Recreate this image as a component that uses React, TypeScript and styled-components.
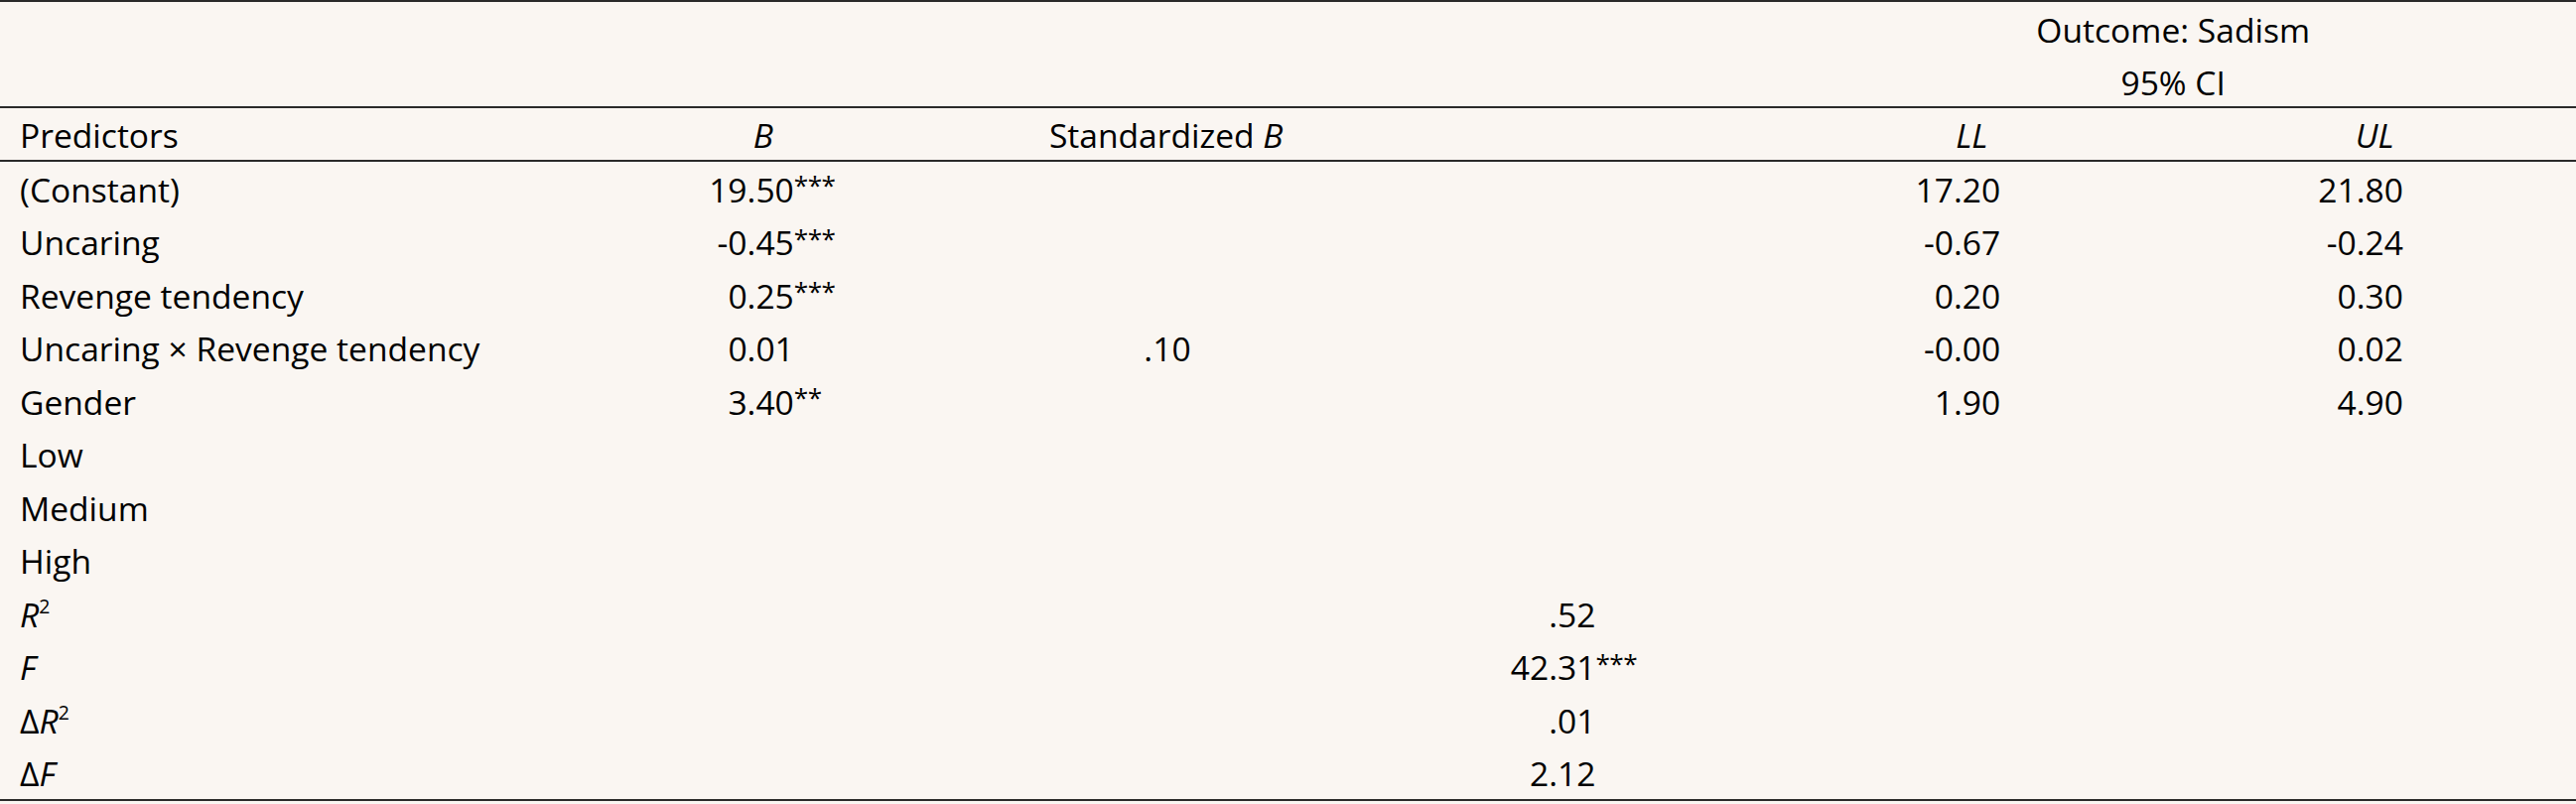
import React from "react";
import styled, { createGlobalStyle } from "styled-components";

const GlobalStyle = createGlobalStyle`
  html, body {
    margin: 0;
    padding: 0;
    background: #faf6f2;
  }
  body {
    font-family: "Open Sans", "Noto Sans", "Liberation Sans", sans-serif;
    color: #000000;
  }
`;

const Table = styled.div`
  width: 2595px;
  border-top: 2px solid #2a2a2a;
  border-bottom: 2px solid #2a2a2a;
  font-size: 33.6px;
  background: #faf6f2;
`;

const Row = styled.div<{ $rule?: boolean }>`
  display: grid;
  grid-template-columns: 566px repeat(5, 1fr);
  height: 53.5px;
  box-sizing: border-box;
  padding-top: 3px;
  align-items: center;
  border-bottom: ${(p) => (p.$rule ? "2px solid #2a2a2a" : "none")};
`;

const LabelCell = styled.div`
  padding-left: 20px;
  white-space: nowrap;
`;

const HeadCell = styled.div<{ $span?: boolean }>`
  text-align: center;
  white-space: nowrap;
  grid-column: ${(p) => (p.$span ? "5 / 7" : "auto")};
`;

const NumCell = styled.div<{ $pr: number; $col: number }>`
  grid-column: ${(p) => p.$col};
  text-align: right;
  padding-right: ${(p) => p.$pr}px;
  white-space: nowrap;
`;

const Stars = styled.span`
  display: inline-block;
  width: 0;
  overflow: visible;
  white-space: nowrap;
  font-size: 0.78em;
  vertical-align: 0.28em;
  letter-spacing: -0.02em;
`;

const Em = styled.i`
  font-style: italic;
`;

const Sup = styled.sup`
  font-size: 0.58em;
  vertical-align: 0.72em;
  line-height: 0;
`;

type Num = { v: string; s?: string };
type BodyRow = {
  label: React.ReactNode;
  b?: Num;
  std?: Num;
  stat?: Num;
  ll?: Num;
  ul?: Num;
};

const rows: BodyRow[] = [
  { label: "(Constant)", b: { v: "19.50", s: "***" }, ll: { v: "17.20" }, ul: { v: "21.80" } },
  { label: "Uncaring", b: { v: "-0.45", s: "***" }, ll: { v: "-0.67" }, ul: { v: "-0.24" } },
  { label: "Revenge tendency", b: { v: "0.25", s: "***" }, ll: { v: "0.20" }, ul: { v: "0.30" } },
  {
    label: "Uncaring × Revenge tendency",
    b: { v: "0.01" },
    std: { v: ".10" },
    ll: { v: "-0.00" },
    ul: { v: "0.02" },
  },
  { label: "Gender", b: { v: "3.40", s: "**" }, ll: { v: "1.90" }, ul: { v: "4.90" } },
  { label: "Low" },
  { label: "Medium" },
  { label: "High" },
  {
    label: (
      <>
        <Em>R</Em>
        <Sup>2</Sup>
      </>
    ),
    stat: { v: ".52" },
  },
  { label: <Em>F</Em>, stat: { v: "42.31", s: "***" } },
  {
    label: (
      <>
        Δ<Em>R</Em>
        <Sup>2</Sup>
      </>
    ),
    stat: { v: ".01" },
  },
  {
    label: (
      <>
        Δ<Em>F</Em>
      </>
    ),
    stat: { v: "2.12" },
  },
];

const Value: React.FC<{ n?: Num; col: number; pr: number }> = ({ n, col, pr }) =>
  n ? (
    <NumCell $col={col} $pr={pr}>
      {n.v}
      {n.s ? <Stars>{n.s}</Stars> : null}
    </NumCell>
  ) : null;

export default function App() {
  return (
    <>
      <GlobalStyle />
      <Table>
        <Row>
          <HeadCell $span>Outcome: Sadism</HeadCell>
        </Row>
        <Row $rule>
          <HeadCell $span>95% CI</HeadCell>
        </Row>
        <Row $rule>
          <LabelCell>Predictors</LabelCell>
          <HeadCell>
            <Em>B</Em>
          </HeadCell>
          <HeadCell>
            Standardized <Em>B</Em>
          </HeadCell>
          <HeadCell />
          <HeadCell>
            <Em>LL</Em>
          </HeadCell>
          <HeadCell>
            <Em>UL</Em>
          </HeadCell>
        </Row>
        {rows.map((r, i) => (
          <Row key={i}>
            <LabelCell>{r.label}</LabelCell>
            <Value n={r.b} col={2} pr={172} />
            <Value n={r.std} col={3} pr={178} />
            <Value n={r.stat} col={4} pr={176} />
            <Value n={r.ll} col={5} pr={174} />
            <Value n={r.ul} col={6} pr={174} />
          </Row>
        ))}
      </Table>
    </>
  );
}
